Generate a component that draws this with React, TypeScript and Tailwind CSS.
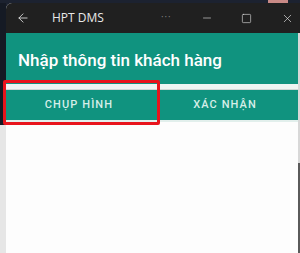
import { ArrowLeft, Minus, Square, X } from "lucide-react";

export default function App() {
  return (
    <div className="relative flex h-[253px] w-[300px] flex-col overflow-hidden bg-[#1c2230] font-['Roboto',sans-serif]">
      {/* Desktop strip above the window */}
      <div className="flex h-[3px] shrink-0">
        <div className="flex-1 bg-[#1c2230]" />
        <div className="w-[20px] bg-[#c98a86]" />
        <div className="w-[12px] bg-[#1c2230]" />
      </div>

      <div className="flex flex-1">
        {/* Left edge of desktop */}
        <div className="flex w-[6px] flex-col">
          <div className="h-[122px] bg-[#151a24]" />
          <div className="flex-1 bg-[#e6e6e6]" />
        </div>

        {/* App window */}
        <div className="flex flex-1 flex-col overflow-hidden rounded-tl-[6px] bg-white">
          {/* Title bar */}
          <div className="flex h-[30px] shrink-0 items-center bg-[#202020] text-[#e8e8e8]">
            <ArrowLeft size={14} strokeWidth={1.4} className="ml-[10px]" />
            <span className="ml-[22px] font-['Open_Sans',sans-serif] text-[12px] leading-none">HPT DMS</span>
            <span className="ml-[57px] text-[10px] leading-none tracking-[1px] text-[#8a8a8a]">···</span>
            <Minus size={12} strokeWidth={1.2} className="ml-[29px]" />
            <Square size={11} strokeWidth={1.3} className="ml-[28px]" />
            <X size={13} strokeWidth={1.2} className="ml-[29px]" />
          </div>

          {/* Screen header */}
          <div className="flex h-[51px] shrink-0 items-center bg-[#10937f] pl-[12px] pt-[5px]">
            <h1 className="text-[17px] font-medium text-white">Nhập thông tin khách hàng</h1>
          </div>

          <div className="h-[6px] shrink-0 border-b border-[#cfd8d6] bg-[#eef5f3]" />

          {/* Tabs */}
          <div className="grid h-[30px] shrink-0 grid-cols-2 bg-[#10937f] text-[11px] font-medium tracking-[1.1px] text-[#d6eee8]">
            <div className="flex items-center justify-center pt-[1px]">CHỤP HÌNH</div>
            <div className="flex items-center justify-center pt-[1px]">XÁC NHẬN</div>
          </div>

          <div className="h-[2px] shrink-0 bg-[#e2efec]" />
          <div className="flex-1 bg-[#fdfdfd]" />
        </div>

        {/* Right edge */}
        <div className="flex w-[2px] flex-col">
          <div className="h-[30px] bg-[#202020]" />
          <div className="h-[130px] bg-[#d8d8d8]" />
          <div className="flex-1 bg-[#5a5a5a]" />
        </div>
      </div>

      {/* Red highlight annotation */}
      <div className="absolute left-[3px] top-[80px] h-[45px] w-[157px] rounded-[2px] border-[3px] border-[#e8141c]" />
    </div>
  );
}
